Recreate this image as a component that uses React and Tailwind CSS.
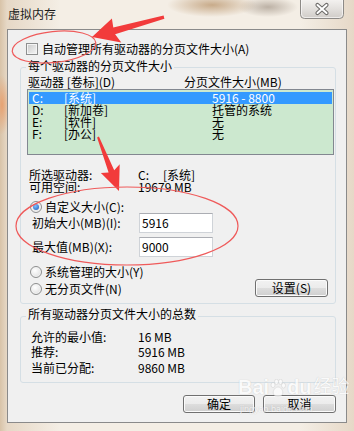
import React from "react";

const F = "font-['Noto_Sans_CJK_SC','Liberation_Sans',sans-serif]";

function Radio({ checked }) {
  return (
    <span className="relative flex h-[12px] w-[12px] shrink-0 items-center justify-center rounded-full border border-[#8e8f8f] bg-[radial-gradient(circle_at_40%_35%,#ffffff,#d8d8d8)] shadow-[inset_0_0_0_1px_#f4f4f4]">
      {checked && (
        <span className="h-[6px] w-[6px] rounded-full bg-[radial-gradient(circle_at_40%_35%,#7fc1ff,#1b58b8)]" />
      )}
    </span>
  );
}

function Btn({ children, w }) {
  return (
    <div
      className={`flex h-[18px] items-center justify-center rounded-[3px] border border-[#707070] bg-[linear-gradient(#f2f2f2_0%,#ebebeb_50%,#dddddd_51%,#cfcfcf_100%)] shadow-[inset_0_0_0_1px_#fbfbfb] text-[12px] leading-[12px] text-black ${w}`}
    >
      {children}
    </div>
  );
}

function Input({ value }) {
  return (
    <div className="flex h-[20px] w-[74px] items-center border border-[#cfd3d8] border-t-[#abadb3] bg-white pl-[2px] text-[12px] leading-[12px]">
      {value}
    </div>
  );
}

export default function App() {
  return (
    <div
      className={`relative flex h-[431px] w-[354px] flex-col overflow-hidden bg-[radial-gradient(45px_12px_at_212px_5px,#c8ab8a,transparent),radial-gradient(30px_10px_at_268px_7px,#bcb1a5,transparent),radial-gradient(8px_30px_at_2px_105px,#e7a272,transparent),linear-gradient(90deg,#d8c3a8_0px,#e6d8c6_7px,#f4eee5_60px,#f4eee5_300px,#e6d8c7_354px)] text-black ${F}`}
    >
      {/* title bar */}
      <div className="flex h-[29px] shrink-0 items-start justify-between">
        <span className="pl-[8px] pt-[8px] text-[12px] leading-[12px] text-[#1a1a1a]">虚拟内存</span>
        <svg width="44" height="19" viewBox="0 0 44 19" className="mr-[10px]">
          <defs>
            <linearGradient id="cb" x1="0" y1="0" x2="0" y2="1">
              <stop offset="0" stopColor="#f3f1ef" />
              <stop offset="0.5" stopColor="#e2dfdc" />
              <stop offset="1" stopColor="#cfcbc7" />
            </linearGradient>
          </defs>
          <path d="M0.5 0 V14.5 Q0.5 18.5 4.5 18.5 H39.5 Q43.5 18.5 43.5 14.5 V0" fill="url(#cb)" stroke="#8d8a87" />
          <path d="M1.5 0 V14 Q1.5 17.5 5 17.5 H39 Q42.5 17.5 42.5 14 V0" fill="none" stroke="#fbfaf9" strokeOpacity="0.7" />
          <path d="M17.5 5 L26.5 13 M26.5 5 L17.5 13" stroke="#6e6c6a" strokeWidth="4.2" strokeLinecap="round" />
          <path d="M17.5 5 L26.5 13 M26.5 5 L17.5 13" stroke="#ffffff" strokeWidth="2" strokeLinecap="round" />
        </svg>
      </div>

      {/* client */}
      <div className="mx-[7px] flex h-[394px] w-[340px] shrink-0 flex-col border border-[#8a8a8a] bg-[#f0f0f0] text-[12px] leading-[12px]">
        <div className="ml-[18px] mt-[13px] flex h-[12px] items-center gap-[4px]">
          <span className="h-[12px] w-[12px] shrink-0 border border-[#8e8f8f] bg-[linear-gradient(135deg,#c9c9c9,#f6f6f6)] shadow-[inset_0_0_0_1px_#f4f4f4]" />
          <span>自动管理所有驱动器的分页文件大小(A)</span>
        </div>

        {/* group 1 */}
        <div className="ml-[12px] mt-[12px] flex h-[237px] w-[316px] flex-col rounded-[3px] border border-[#d5dfe5]">
          <span className="-mt-[8px] ml-[5px] h-[12px] w-fit bg-[#f0f0f0] px-[2px]">每个驱动器的分页文件大小</span>
          <div className="mt-[4px] flex h-[12px] pl-[7px]">
            <span className="w-[156px]">驱动器 [卷标](D)</span>
            <span>分页文件大小(MB)</span>
          </div>
          <div className="ml-[6px] mt-[1px] flex h-[66px] w-[307px] flex-col border border-[#828790] bg-[#cce8cf] px-[1px] pt-[2px]">
            {[
              ["C:", "[系统]", "5916 - 8800", true],
              ["D:", "[新加卷]", "托管的系统", false],
              ["E:", "[软件]", "无", false],
              ["F:", "[办公]", "无", false],
            ].map(([d, l, s, sel]) => (
              <div
                key={d}
                className={`flex h-[12px] items-center pl-[3px] ${sel ? "bg-[#3399ff] text-white" : ""}`}
              >
                <span className="w-[32px]">{d}</span>
                <span className="w-[148px]">{l}</span>
                <span>{s}</span>
              </div>
            ))}
          </div>
          <div className="mt-[14px] flex h-[12px] pl-[8px]">
            <span className="w-[109px]">所选驱动器:</span>
            <span className="w-[25px]">C:</span>
            <span>[系统]</span>
          </div>
          <div className="flex h-[12px] pl-[8px]">
            <span className="w-[109px]">可用空间:</span>
            <span>19679 MB</span>
          </div>
          <div className="mt-[8px] flex h-[12px] items-center gap-[3px] pl-[9px]">
            <Radio checked />
            <span>自定义大小(C):</span>
          </div>
          <div className="flex h-[20px] items-center pl-[11px]">
            <span className="w-[107px]">初始大小(MB)(I):</span>
            <Input value="5916" />
          </div>
          <div className="mt-[4px] flex h-[20px] items-center pl-[11px]">
            <span className="w-[107px]">最大值(MB)(X):</span>
            <Input value="9000" />
          </div>
          <div className="mt-[9px] flex items-start justify-between pr-[7px]">
            <div className="flex flex-col pl-[9px]">
              <div className="flex h-[12px] items-center gap-[3px]">
                <Radio />
                <span>系统管理的大小(Y)</span>
              </div>
              <div className="mt-[5px] flex h-[12px] items-center gap-[3px]">
                <Radio />
                <span>无分页文件(N)</span>
              </div>
            </div>
            <div className="mt-[13px]">
              <Btn w="w-[73px]">设置(S)</Btn>
            </div>
          </div>
        </div>

        {/* group 2 */}
        <div className="ml-[12px] mt-[12px] flex h-[67px] w-[316px] flex-col rounded-[3px] border border-[#d5dfe5]">
          <span className="-mt-[9px] ml-[5px] h-[12px] w-fit bg-[#f0f0f0] px-[2px]">所有驱动器分页文件大小的总数</span>
          <div className="mt-[11px] flex h-[12px] pl-[10px]">
            <span className="w-[107px]">允许的最小值:</span>
            <span>16 MB</span>
          </div>
          <div className="mt-[3px] flex h-[12px] pl-[10px]">
            <span className="w-[107px]">推荐:</span>
            <span>5916 MB</span>
          </div>
          <div className="mt-[4px] flex h-[12px] pl-[10px]">
            <span className="w-[107px]">当前已分配:</span>
            <span>9860 MB</span>
          </div>
        </div>

        <div className="mt-[12px] flex justify-end gap-[8px] pr-[10px]">
          <Btn w="w-[72px]">确定</Btn>
          <Btn w="w-[73px]">取消</Btn>
        </div>
      </div>

      {/* watermark */}
      <div className="pointer-events-none absolute left-[238px] top-[377px] flex flex-col items-start opacity-70">
        <div className="flex items-end text-[20px] font-bold leading-[20px] text-white [text-shadow:0_0_1px_#b0b0b0] font-['Liberation_Sans','Noto_Sans_CJK_SC',sans-serif]">
          <span>Bai</span>
          <svg width="16" height="18" viewBox="0 0 16 18" className="mx-[1px]">
            <g fill="#fff" stroke="#c0c0c0" strokeWidth="0.5">
              <ellipse cx="3" cy="6" rx="2" ry="2.6" />
              <ellipse cx="6.5" cy="2.8" rx="2" ry="2.6" />
              <ellipse cx="10.5" cy="2.8" rx="2" ry="2.6" />
              <ellipse cx="13.5" cy="6.5" rx="2" ry="2.6" />
              <path d="M8 8 C4 8 2 14 4 16 C6 18 10 18 12 16 C14 14 12 8 8 8 Z" />
            </g>
          </svg>
          <span>du</span>
          <span className="ml-[2px] text-[18px] font-normal">经验</span>
        </div>
        <span className="mt-[8px] ml-[2px] text-[9px] leading-[9px] text-white [text-shadow:0_0_1px_#b0b0b0] font-['Liberation_Sans',sans-serif]">jingyan.baidu.com</span>
      </div>

      {/* red annotations */}
      <svg className="pointer-events-none absolute left-0 top-0" width="354" height="431" viewBox="0 0 354 431">
        <ellipse cx="54" cy="47" rx="42" ry="15.5" transform="rotate(-6 54 47)" fill="none" stroke="#ef5a5a" strokeWidth="1.2" />
        <polygon
          points="163.6,15.6 113.3,27.4 111.9,18.4 92,37 121.3,42.6 115.1,34.2 164.4,18.8"
          fill="#f23b3b"
        />
        <polygon
          points="98.9,136.6 114.2,170.3 119.7,164.3 119,191 100.9,172.9 108.6,172.5 97.1,137.4"
          fill="#f23b3b"
        />
        <ellipse cx="127" cy="226" rx="111" ry="39" fill="none" stroke="#ef5a5a" strokeWidth="1.2" />
      </svg>
    </div>
  );
}
